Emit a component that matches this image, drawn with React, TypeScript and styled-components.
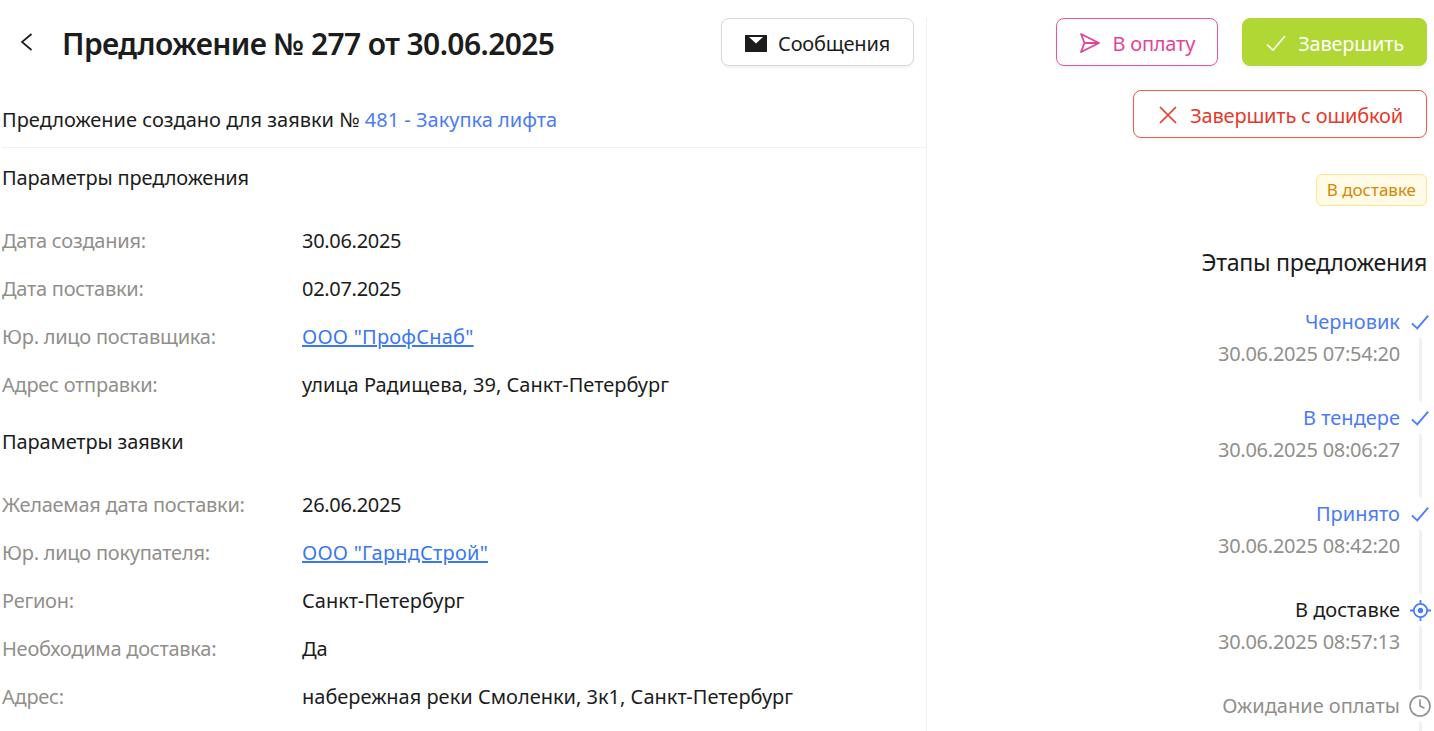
import styled, { createGlobalStyle } from "styled-components";
import { Clock } from "lucide-react";

const Global = createGlobalStyle`
  html, body {
    margin: 0;
    height: 100%;
    overflow: hidden;
    background: #fff;
  }
  body {
    font-family: "Noto Sans", "Open Sans", sans-serif;
    color: #1c1c1c;
  }
`;

const Page = styled.div`
  display: grid;
  grid-template-columns: 927px 500px;
  height: 713px;
  padding-top: 18px;
  overflow: hidden;
`;

const Main = styled.main`
  border-right: 1px solid #f0f0f0;
`;

const Header = styled.header`
  display: flex;
  align-items: center;
  justify-content: space-between;
  height: 48px;
  padding: 0 12px 0 20px;
`;

const HeaderLeft = styled.div`
  display: flex;
  align-items: center;
  gap: 29px;
`;

const Title = styled.h1`
  margin: 0;
  padding-top: 4px;
  font-size: 30px;
  line-height: 40px;
  font-weight: 600;
  letter-spacing: -0.6px;
`;

const Button = styled.button<{ $tone: "plain" | "pink" | "green" | "red" }>`
  display: inline-flex;
  align-items: center;
  justify-content: center;
  gap: 11px;
  height: 48px;
  box-sizing: border-box;
  padding: 2px ${({ $tone }) => ($tone === "pink" || $tone === "green" ? "22px" : "23px")} 0;
  border-radius: 8px;
  font-family: inherit;
  font-size: 20px;
  letter-spacing: -0.2px;
  background: ${({ $tone }) => ($tone === "green" ? "#b0d734" : "#fff")};
  border: 1px solid
    ${({ $tone }) =>
      $tone === "plain" ? "#d9d9d9" : $tone === "pink" ? "#e6569f" : $tone === "green" ? "#b0d734" : "#ee5a4b"};
  color: ${({ $tone }) =>
    $tone === "plain" ? "#1c1c1c" : $tone === "pink" ? "#e0459a" : $tone === "green" ? "#fff" : "#e5392b"};
  box-shadow: 0 2px 3px rgba(0, 0, 0, 0.05);
`;

const Intro = styled.p`
  margin: 38px 0 14px 2px;
  padding: 0 0 11px;
  line-height: 32px;
  font-size: 20px;
  border-bottom: 1px solid #f0f0f0;
`;

const IntroLink = styled.a`
  color: #4b7bf5;
`;

const Section = styled.h2`
  margin: 0;
  padding-left: 2px;
  font-size: 20px;
  line-height: 32px;
  font-weight: 400;
  letter-spacing: -0.15px;
`;

const Params = styled.dl`
  display: grid;
  grid-template-columns: 300px 1fr;
  grid-auto-rows: 48px;
  align-items: center;
  margin: 22px 0 18px;
  padding-left: 2px;
  font-size: 20px;
`;

const Label = styled.dt`
  color: #918f8b;
  letter-spacing: -0.25px;
`;

const Value = styled.dd`
  margin: 0;
`;

const DateValue = styled(Value)`
  letter-spacing: -0.3px;
`;

const ValueLink = styled.a`
  color: #3a78f2;
  text-decoration: underline;
  letter-spacing: 0.2px;
`;

const Side = styled.aside`
  display: flex;
  flex-direction: column;
  align-items: flex-end;
`;

const ActionRow = styled.div`
  display: flex;
  gap: 24px;
  margin-bottom: 24px;
`;

const Badge = styled.span`
  margin-top: 36px;
  padding: 0 10px;
  height: 32px;
  box-sizing: border-box;
  line-height: 30px;
  font-size: 17px;
  color: #d48806;
  background: #fffbe6;
  border: 1px solid #ffe58f;
  border-radius: 6px;
`;

const StagesTitle = styled.h3`
  margin: 40px 0 28px;
  font-size: 23.2px;
  line-height: 32px;
  font-weight: 400;
  letter-spacing: -0.3px;
`;

const Stages = styled.ol`
  list-style: none;
  margin: 0 -4px 0 0;
  padding: 0;
`;

const Stage = styled.li`
  display: grid;
  grid-template-columns: auto 22px;
  justify-content: end;
  column-gap: 9px;
  height: 96px;
`;

const StageText = styled.div`
  text-align: right;
  font-size: 20px;
  line-height: 32px;
`;

const StageName = styled.div<{ $state: "done" | "active" | "wait" }>`
  color: ${({ $state }) => ($state === "done" ? "#4b7bf5" : $state === "active" ? "#1c1c1c" : "#918f8b")};
`;

const StageDate = styled.div`
  color: #918f8b;
  letter-spacing: -0.25px;
`;

const StageRail = styled.div`
  display: flex;
  flex-direction: column;
  align-items: center;
`;

const StageIcon = styled.div<{ $wait?: boolean }>`
  display: flex;
  align-items: center;
  justify-content: center;
  height: 32px;
  color: ${({ $wait }) => ($wait ? "#918f8b" : "#4b7bf5")};
`;

const Tail = styled.div`
  width: 3px;
  flex: 1;
  background: #f0f0f0;
`;

const BackArrow = () => (
  <svg width="13" height="18" viewBox="0 0 13 18" fill="none" stroke="#1c1c1c" strokeWidth="1.7">
    <path d="M11.5 1 2 9l9.5 8" />
  </svg>
);

const Envelope = () => (
  <svg width="22" height="17" viewBox="0 0 22 17" fill="#1c1c1c">
    <path d="M0 0h22v17H0zM4 2l7 6.5L18 2z" fillRule="evenodd" />
  </svg>
);

const Plane = () => (
  <svg width="22" height="22" viewBox="0 0 22 22" fill="none" stroke="currentColor" strokeWidth="1.8" strokeLinejoin="round">
    <path d="M2 2l18 9-18 9 3.5-9zM5.5 11H20" />
  </svg>
);

const Tick = ({ size = 22, weight = 1.6 }: { size?: number; weight?: number }) => (
  <svg width={size} height={size} viewBox="0 0 22 22" fill="none" stroke="currentColor" strokeWidth={weight}>
    <path d="M2 12.5 8 18 20 4" />
  </svg>
);

const Cross = () => (
  <svg width="22" height="22" viewBox="0 0 22 22" fill="none" stroke="currentColor" strokeWidth="1.7">
    <path d="M3 3l16 16M19 3 3 19" />
  </svg>
);

const Target = () => (
  <svg width="21" height="21" viewBox="0 0 22 22" fill="none" stroke="currentColor" strokeWidth="1.9">
    <circle cx="11" cy="11" r="7" />
    <circle cx="11" cy="11" r="2.8" fill="currentColor" stroke="none" />
    <path d="M11 0v4M11 18v4M0 11h4M18 11h4" />
  </svg>
);

const stages = [
  { name: "Черновик", date: "30.06.2025 07:54:20", state: "done" as const },
  { name: "В тендере", date: "30.06.2025 08:06:27", state: "done" as const },
  { name: "Принято", date: "30.06.2025 08:42:20", state: "done" as const },
  { name: "В доставке", date: "30.06.2025 08:57:13", state: "active" as const },
  { name: "Ожидание оплаты", date: "", state: "wait" as const },
];

export default function App() {
  return (
    <>
      <Global />
      <Page>
        <Main>
          <Header>
            <HeaderLeft>
              <BackArrow />
              <Title>Предложение № 277 от 30.06.2025</Title>
            </HeaderLeft>
            <Button $tone="plain">
              <Envelope />
              Сообщения
            </Button>
          </Header>
          <Intro>
            Предложение создано для заявки № <IntroLink>481 - Закупка лифта</IntroLink>
          </Intro>
          <Section>Параметры предложения</Section>
          <Params>
            <Label>Дата создания:</Label>
            <DateValue>30.06.2025</DateValue>
            <Label>Дата поставки:</Label>
            <DateValue>02.07.2025</DateValue>
            <Label>Юр. лицо поставщика:</Label>
            <Value>
              <ValueLink>ООО "ПрофСнаб"</ValueLink>
            </Value>
            <Label>Адрес отправки:</Label>
            <Value>улица Радищева, 39, Санкт-Петербург</Value>
          </Params>
          <Section>Параметры заявки</Section>
          <Params>
            <Label>Желаемая дата поставки:</Label>
            <DateValue>26.06.2025</DateValue>
            <Label>Юр. лицо покупателя:</Label>
            <Value>
              <ValueLink>ООО "ГарндСтрой"</ValueLink>
            </Value>
            <Label>Регион:</Label>
            <Value>Санкт-Петербург</Value>
            <Label>Необходима доставка:</Label>
            <Value>Да</Value>
            <Label>Адрес:</Label>
            <Value>набережная реки Смоленки, 3к1, Санкт-Петербург</Value>
          </Params>
        </Main>
        <Side>
          <ActionRow>
            <Button $tone="pink">
              <Plane />В оплату
            </Button>
            <Button $tone="green">
              <Tick />
              Завершить
            </Button>
          </ActionRow>
          <Button $tone="red">
            <Cross />
            Завершить с ошибкой
          </Button>
          <Badge>В доставке</Badge>
          <StagesTitle>Этапы предложения</StagesTitle>
          <Stages>
            {stages.map((s) => (
              <Stage key={s.name}>
                <StageText>
                  <StageName $state={s.state}>{s.name}</StageName>
                  {s.date && <StageDate>{s.date}</StageDate>}
                </StageText>
                <StageRail>
                  <StageIcon $wait={s.state === "wait"}>
                    {s.state === "done" && <Tick size={20} weight={2} />}
                    {s.state === "active" && <Target />}
                    {s.state === "wait" && <Clock size={24} strokeWidth={1.6} />}
                  </StageIcon>
                  <Tail />
                </StageRail>
              </Stage>
            ))}
          </Stages>
        </Side>
      </Page>
    </>
  );
}
